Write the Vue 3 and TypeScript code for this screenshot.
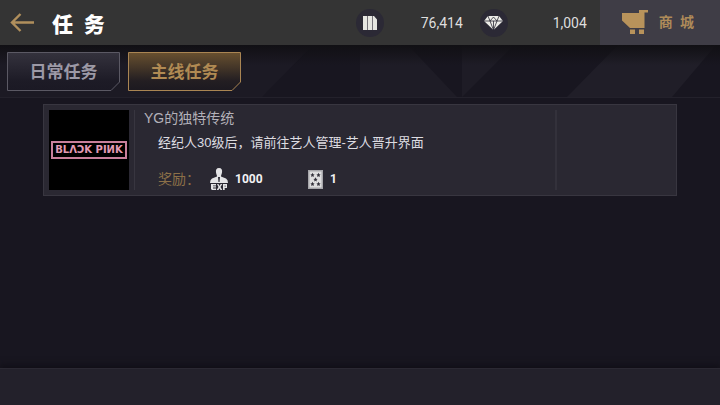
<script setup lang="ts">
import { ref } from 'vue'

type TabId = 'daily' | 'main'

interface Tab {
  id: TabId
  label: string
}

interface Task {
  tab: TabId
  title: string
  detail: string
  exp: number
  cards: number
}

const tabs: Tab[] = [
  { id: 'daily', label: '日常任务' },
  { id: 'main', label: '主线任务' },
]

const tasks: Task[] = [
  {
    tab: 'main',
    title: 'YG的独特传统',
    detail: '经纪人30级后，请前往艺人管理-艺人晋升界面',
    exp: 1000,
    cards: 1,
  },
]

const active = ref<TabId>('main')
const coins = (76414).toLocaleString('en-US')
const gems = (1004).toLocaleString('en-US')
</script>

<template>
  <div class="screen">
    <header class="topbar">
      <button class="back" type="button" aria-label="返回">
        <svg width="24" height="20" viewBox="0 0 24 20" fill="none" stroke="#b08f5c" stroke-width="2.400">
          <path d="M24 9.500H2M10.500 1L2 9.500L10.500 18" />
        </svg>
      </button>
      <h1>任&ensp;务</h1>
      <div class="wallet">
        <div class="currency">
          <span class="badge">
            <svg width="14" height="14" viewBox="0 0 14 14" fill="#e6e6e2">
              <path d="M0 0H4.300V14H0zM4.900 0H9.200V14H4.900zM9.800 0H11L14 3.500V14H9.800z" />
            </svg>
          </span>
          <span class="amount">{{ coins }}</span>
        </div>
        <div class="currency">
          <span class="badge">
            <svg width="19" height="14" viewBox="0 0 19 14">
              <path d="M4 0H15L19 5L9.500 14L0 5z" fill="#ecece8" />
              <path d="M0 5H19M4 0L6 5L9.500 14L13 5L15 0M6 5L9.500 1L13 5M9.500 5V14" fill="none" stroke="#2b2935" stroke-width="0.800" />
            </svg>
          </span>
          <span class="amount">{{ gems }}</span>
        </div>
      </div>
      <button class="shop" type="button">
        <svg width="27" height="24" viewBox="0 0 27 24" fill="#b8935b">
          <path d="M1 3H18V0H27V2.500H23.500V18H9L1 10.500zM9 19.500H14V24H9zM18 19.500H23V24H18z" />
        </svg>
        <span>商&ensp;城</span>
      </button>
    </header>

    <nav class="tabs">
      <svg class="facets" viewBox="0 0 720 52" preserveAspectRatio="none" aria-hidden="true">
        <path d="M0 0H313L262 52H0z" fill="#1c1a24" />
        <path d="M360 0H408L457 52H360z" fill="#1e1c26" />
        <path d="M462 0H514L462 52z" fill="#1e1c26" />
        <path d="M618 0H716L672 52H567z" fill="#201e28" />
      </svg>
      <button
        v-for="tab in tabs"
        :key="tab.id"
        type="button"
        class="tab"
        :class="{ active: tab.id === active }"
        @click="active = tab.id"
      >
        <svg class="frame" viewBox="0 0 113 39" preserveAspectRatio="none" aria-hidden="true">
          <defs>
            <linearGradient :id="`fill-${tab.id}`" x1="0" y1="0" x2="0" y2="1">
              <stop offset="0" :stop-color="tab.id === active ? '#68502f' : '#34323d'" />
              <stop offset="0.750" :stop-color="tab.id === active ? '#231e22' : '#1d1b26'" />
              <stop offset="1" :stop-color="tab.id === active ? '#1c1920' : '#1b1924'" />
            </linearGradient>
          </defs>
          <path
            d="M0.500 0.500H112.500V30L104 38.500H0.500z"
            :fill="`url(#fill-${tab.id})`"
            :stroke="tab.id === active ? '#a98553' : '#5b5964'"
          />
        </svg>
        <span>{{ tab.label }}</span>
      </button>
    </nav>

    <main class="list">
      <template v-for="task in tasks" :key="task.title">
        <article v-if="task.tab === active" class="task">
          <div class="cover"><span>BLΛƆK PIИK</span></div>
          <div class="info">
            <h2>{{ task.title }}</h2>
            <p>{{ task.detail }}</p>
            <div class="rewards">
              <span class="label">奖励：</span>
              <span class="reward exp">
                <svg width="18" height="22" viewBox="0 0 18 22">
                  <path d="M9 0C11.500 0 12.500 2 12 4.500C11.700 6.500 11 7 11 8.500L16 10.500Q18 11.500 18 15H0Q0 11.500 2 10.500L7 8.500C7 7 6.300 6.500 6 4.500C5.500 2 6.500 0 9 0z" fill="#e4e4e6" />
                  <path d="M8 9H10L9.500 14H8.500z" fill="#2a2832" />
                  <path d="M1 16H6V17.500H3V18.200H6V19.500H3V20.500H6V22H2L1 21zM7 16H8.500L9.500 18L10.700 16H12.300L10.500 19L12.300 22H10.500L9.500 20.300L8.500 22H6.700L8.500 19zM13 16H17V20H14.700V22H13zM14.700 17.500V18.700H15.500V17.500z" fill="#e4e4e6" fill-rule="evenodd" />
                </svg>
                <b>{{ task.exp }}</b>
              </span>
              <span class="reward">
                <svg width="15" height="19" viewBox="0 0 15 19">
                  <path d="M0 0H15V19H0z" fill="#a6a6aa" />
                  <path d="M1.500 1.500H13.500V17.500H1.500z" fill="#dededf" />
                  <path
                    v-for="[x, y] in [[4.5, 5], [10.5, 5], [7.5, 9.500], [4.5, 14], [10.5, 14]]"
                    :key="`${x}-${y}`"
                    :transform="`translate(${x} ${y})`"
                    d="M0 -2.200L0.700 -0.700L2.100 -0.600L1 0.500L1.400 2L0 1.200L-1.400 2L-1 0.500L-2.100 -0.600L-0.700 -0.700z"
                    fill="#33313a"
                  />
                </svg>
                <b>{{ task.cards }}</b>
              </span>
            </div>
          </div>
          <div class="action"></div>
        </article>
      </template>
    </main>

    <footer class="bottom"></footer>
  </div>
</template>

<style>
body {
  margin: 0;
  background: #181620;
}
</style>

<style scoped>
.screen {
  display: flex;
  flex-direction: column;
  min-height: 100vh;
  background: #181620;
  font-family: Roboto, "Noto Sans CJK SC", sans-serif;
}

button {
  margin: 0;
  padding: 0;
  border: 0;
  background: none;
  font: inherit;
  cursor: pointer;
}

svg {
  display: block;
  flex: none;
}

.topbar {
  display: flex;
  align-items: center;
  height: 45px;
  background: #343434;
}

.back {
  padding: 0 18px 0 10px;
}

h1 {
  margin: 0;
  color: #fff;
  font-size: 21px;
  line-height: 24px;
  padding-top: 4px;
  font-weight: 900;
}

.wallet {
  display: flex;
  flex: 1;
  justify-content: flex-end;
  gap: 17px;
  padding-right: 13px;
}

.currency {
  display: flex;
  align-items: center;
  justify-content: space-between;
  width: 107px;
}

.badge {
  display: grid;
  place-items: center;
  width: 28px;
  height: 28px;
  border-radius: 50%;
  background: #2b2935;
}

.amount {
  color: #dedede;
  font-size: 14px;
  font-weight: 400;
  line-height: 20px;
}

.shop {
  display: flex;
  align-items: center;
  gap: 11px;
  height: 100%;
  padding: 0 26px 0 21px;
  background: #3f3d46;
  color: #ae8b59;
  font-size: 14px;
  font-weight: 700;
  line-height: 20px;
}

.shop svg {
  margin-bottom: 2px;
}

.shop span {
  padding-bottom: 2px;
}

.tabs {
  position: relative;
  display: flex;
  gap: 8px;
  padding: 7px 7px 6px;
  border-bottom: 1px solid #23212b;
}

.tabs::after {
  content: "";
  position: absolute;
  inset: 0 0 auto;
  height: 20px;
  background: linear-gradient(#111014, transparent);
}

.facets {
  position: absolute;
  inset: 0;
  width: 100%;
  height: 100%;
}

.tab {
  position: relative;
  z-index: 1;
  width: 113px;
  height: 39px;
  color: #9c99a6;
  font-size: 17px;
  font-weight: 700;
  line-height: 24px;
}

.tab.active {
  color: #b08a53;
}

.tab span {
  position: relative;
}

.frame {
  position: absolute;
  inset: 0;
  width: 100%;
  height: 100%;
}

.list {
  flex: 1;
  padding: 6px 43px;
}

.task {
  display: flex;
  padding: 5px;
  border: 1px solid #383640;
  background: #2a2832;
}

.cover {
  display: grid;
  place-items: center;
  width: 80px;
  height: 80px;
  background: #000;
}

.cover span {
  padding: 0 2px;
  border: 2px solid #c9809c;
  color: #e39ab4;
  font-family: "DejaVu Sans", sans-serif;
  font-size: 10px;
  font-weight: 700;
  line-height: 14px;
  white-space: nowrap;
}

.info {
  flex: 1;
  margin-left: 5px;
  padding-left: 9px;
  border-left: 1px solid #383640;
}

h2,
p {
  font-family: "Liberation Sans", "Noto Sans CJK SC", sans-serif;
}

h2 {
  margin: 0;
  color: #b3b1b9;
  font-size: 14px;
  font-weight: 400;
  line-height: 16px;
}

p {
  margin: 7px 0 0 14px;
  color: #dddce1;
  font-size: 13px;
  line-height: 20px;
}

.rewards {
  display: flex;
  align-items: center;
  margin: 15px 0 0 14px;
  height: 22px;
}

.label {
  width: 52px;
  color: #8c7048;
  font-size: 14px;
  line-height: 20px;
}

.reward {
  display: flex;
  align-items: center;
  gap: 7px;
  color: #f2f2f4;
  font-size: 12px;
}

.exp {
  width: 98px;
}

.action {
  width: 114px;
  border-left: 2px solid #33313b;
}

.bottom {
  height: 36px;
  border-top: 1px solid #2b2933;
  background: #23212b;
  box-shadow: 0 -3px 6px #110f17;
}
</style>
